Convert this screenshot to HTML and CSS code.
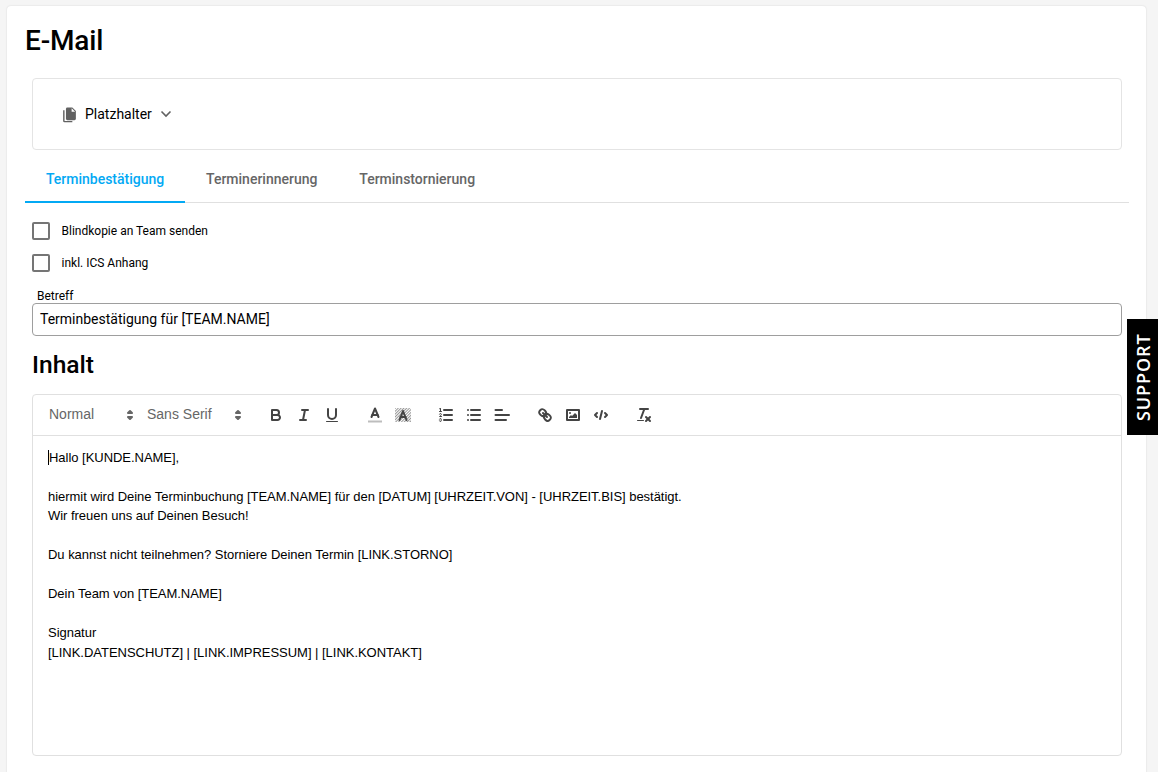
FILE: index.html
```html
<!DOCTYPE html>
<html lang="de">
<head>
<meta charset="utf-8">
<title>E-Mail</title>
<link rel="stylesheet" href="styles.css">
</head>
<body>
<main class="card">
  <h1 class="title">E-Mail</h1>
  <section class="panel">
    <button class="menu-btn" type="button">
      <svg class="copy-icon" viewBox="0 0 24 24" width="17" height="17"><path d="M9 2h7l5 5v11a2 2 0 0 1-2 2H9a2 2 0 0 1-2-2V4a2 2 0 0 1 2-2z"/><path d="M3 6h2v15h11v2H5a2 2 0 0 1-2-2V6z"/><path d="M15 3v5h5z" fill="#fff"/></svg>
      <span>Platzhalter</span>
      <svg class="chev" viewBox="0 0 12 8" width="12" height="8"><polyline points="1.5 1.5 6 6 10.5 1.5"/></svg>
    </button>
  </section>
  <nav class="tabs">
    <a class="tab active">Terminbestätigung</a>
    <a class="tab">Terminerinnerung</a>
    <a class="tab">Terminstornierung</a>
  </nav>
  <div class="form">
    <label class="check"><span class="box"></span><span>Blindkopie an Team senden</span></label>
    <label class="check"><span class="box"></span><span>inkl. ICS Anhang</span></label>
    <div class="field-label">Betreff</div>
    <div class="input">Terminbestätigung für [TEAM.NAME]</div>
    <h2 class="subtitle">Inhalt</h2>
    <div class="editor">
      <div class="toolbar">
        <div class="picker header-picker"><span>Normal</span><svg viewBox="0 0 18 18" width="18" height="18"><polygon class="arrow" points="7 11 9 13 11 11 7 11"/><polygon class="arrow" points="7 7 9 5 11 7 7 7"/></svg></div>
        <div class="picker font-picker"><span>Sans Serif</span><svg viewBox="0 0 18 18" width="18" height="18"><polygon class="arrow" points="7 11 9 13 11 11 7 11"/><polygon class="arrow" points="7 7 9 5 11 7 7 7"/></svg></div>
        <div class="group">
          <svg class="ico" viewBox="0 0 18 18"><path class="s" d="M5,4H9.5A2.5,2.5,0,0,1,12,6.5v0A2.5,2.5,0,0,1,9.5,9H5A0,0,0,0,1,5,9V4A0,0,0,0,1,5,4Z"/><path class="s" d="M5,9h5.5A2.5,2.5,0,0,1,13,11.5v0A2.5,2.5,0,0,1,10.5,14H5a0,0,0,0,1,0,0V9A0,0,0,0,1,5,9Z"/></svg>
          <svg class="ico" viewBox="0 0 18 18"><line class="s" x1="7" x2="13" y1="4" y2="4"/><line class="s" x1="5" x2="11" y1="14" y2="14"/><line class="s" x1="8" x2="10" y1="14" y2="4"/></svg>
          <svg class="ico" viewBox="0 0 18 18"><path class="s" d="M5,3V9a4.012,4.012,0,0,0,4,4H9a4.012,4.012,0,0,0,4-4V3"/><rect class="f" height="1" rx="0.5" ry="0.5" width="12" x="3" y="15"/></svg>
        </div>
        <div class="group">
          <svg class="ico" viewBox="0 0 18 18"><line class="s light" x1="3" x2="15" y1="15.5" y2="15.5"/><polyline class="s" points="5.5 11 9 2.5 12.5 11"/><line class="s" x1="11.63" x2="6.38" y1="9" y2="9"/></svg>
          <svg class="ico" viewBox="0 0 18 18"><defs><pattern id="hatch" width="2" height="2" patternUnits="userSpaceOnUse" patternTransform="rotate(45)"><rect width="1" height="2" fill="#444"/></pattern></defs><rect x="1" y="2" width="16" height="14" fill="url(#hatch)" opacity=".55"/><polyline class="s" points="5.5 14 9 5 12.5 14"/><line class="s" x1="11.63" x2="6.38" y1="11" y2="11"/></svg>
        </div>
        <div class="group">
          <svg class="ico" viewBox="0 0 18 18"><line class="s" x1="7" x2="15" y1="4" y2="4"/><line class="s" x1="7" x2="15" y1="9" y2="9"/><line class="s" x1="7" x2="15" y1="14" y2="14"/><line class="s thin" x1="2.5" x2="4.5" y1="5.5" y2="5.5"/><path class="f" d="M3.5,6A0.5,0.5,0,0,1,3,5.5V3.085l-0.276.138A0.5,0.5,0,0,1,2.053,3c-0.124-.247-0.023-0.324.224-0.447l1-.5A0.5,0.5,0,0,1,4,2.5v3A0.5,0.5,0,0,1,3.5,6Z"/><path class="s thin" d="M4.5,10.5h-2c0-.234,1.85-1.076,1.85-2.234A0.959,0.959,0,0,0,2.5,8.156"/><path class="s thin" d="M2.5,14.846a0.959,0.959,0,0,0,1.85-.109A0.7,0.7,0,0,0,3.75,14a0.688,0.688,0,0,0,.6-0.736,0.959,0.959,0,0,0-1.85-.109"/></svg>
          <svg class="ico" viewBox="0 0 18 18"><line class="s" x1="6" x2="15" y1="4" y2="4"/><line class="s" x1="6" x2="15" y1="9" y2="9"/><line class="s" x1="6" x2="15" y1="14" y2="14"/><line class="s" x1="3" x2="3" y1="4" y2="4"/><line class="s" x1="3" x2="3" y1="9" y2="9"/><line class="s" x1="3" x2="3" y1="14" y2="14"/></svg>
          <svg class="ico" viewBox="0 0 18 18"><line class="s" x1="2.5" x2="16" y1="9" y2="9"/><line class="s" x1="2.5" x2="13" y1="14" y2="14"/><line class="s" x1="2.5" x2="9" y1="4" y2="4"/></svg>
        </div>
        <div class="group">
          <svg class="ico" viewBox="0 0 18 18"><line class="s" x1="7" x2="11" y1="7" y2="11"/><path class="s" d="M8.9,4.577a3.476,3.476,0,0,1,.36,4.679A3.476,3.476,0,0,1,4.577,8.9C3.185,7.5,2.035,6.4,4.217,4.217S7.5,3.185,8.9,4.577Z"/><path class="s" d="M13.423,9.1a3.476,3.476,0,0,0-4.679-.36,3.476,3.476,0,0,0,.36,4.679c1.392,1.392,2.5,2.542,4.679.36S14.815,10.5,13.423,9.1Z"/></svg>
          <svg class="ico" viewBox="0 0 18 18"><rect class="s" height="10" width="12" x="3" y="4"/><circle class="f" cx="6" cy="7" r="1"/><polyline class="f" points="5 12 5 11 7 9 8 10 11 7 13 9 13 12 5 12"/></svg>
          <svg class="ico" viewBox="0 0 18 18"><polyline class="s" points="5 7 3 9 5 11"/><polyline class="s" points="13 7 15 9 13 11"/><line class="s" x1="10" x2="8" y1="5" y2="13"/></svg>
        </div>
        <div class="group">
          <svg class="ico" viewBox="0 0 18 18"><line class="s" x1="5" x2="13" y1="3" y2="3"/><line class="s" x1="6" x2="9.35" y1="12" y2="3"/><line class="s" x1="11" x2="15" y1="11" y2="15"/><line class="s" x1="15" x2="11" y1="11" y2="15"/><rect class="f" height="1" rx="0.5" ry="0.5" width="7" x="2" y="14"/></svg>
        </div>
      </div>
      <div class="content">
        <p><span class="caret"></span>Hallo [KUNDE.NAME],</p>
        <p><br></p>
        <p>hiermit wird Deine Terminbuchung [TEAM.NAME] für den [DATUM] [UHRZEIT.VON] - [UHRZEIT.BIS] bestätigt.</p>
        <p>Wir freuen uns auf Deinen Besuch!</p>
        <p><br></p>
        <p>Du kannst nicht teilnehmen? Storniere Deinen Termin [LINK.STORNO]</p>
        <p><br></p>
        <p>Dein Team von [TEAM.NAME]</p>
        <p><br></p>
        <p>Signatur</p>
        <p>[LINK.DATENSCHUTZ] | [LINK.IMPRESSUM] | [LINK.KONTAKT]</p>
      </div>
    </div>
  </div>
</main>
<a class="support">SUPPORT</a>
</body>
</html>
```
FILE: styles.css
```css
* { box-sizing: border-box; }
html, body { margin: 0; height: 772px; overflow: hidden; }
body { background: #f5f5f5; font-family: Roboto, "Liberation Sans", sans-serif; color: #000; }
.card {
  margin: 6px 12px 0 7px;
  height: 800px;
  padding: 0 17px 0 18px;
  background: #fff;
  border-radius: 4px;
  box-shadow: 0 0 2px rgba(0,0,0,.14);
}
.title { margin: 0; padding-top: 18px; height: 72px; font-size: 28px; line-height: 34px; font-weight: 500; letter-spacing: -.15px; }
.panel {
  margin: 0 7px;
  height: 72px;
  border: 1px solid #e4e4e4;
  border-radius: 4px;
  display: flex;
  align-items: center;
  padding-left: 28px;
}
.menu-btn {
  display: flex; align-items: center;
  background: none; border: 0; padding: 0;
  font: 400 14px Roboto, sans-serif; color: #000;
}
.copy-icon { fill: #616161; margin-right: 7px; }
.chev { margin-left: 8px; fill: none; stroke: #616161; stroke-width: 1.6; }
.tabs { display: flex; height: 53px; padding-top: 7px; border-bottom: 1px solid #e0e0e0; }
.tab {
  display: flex; align-items: center;
  padding: 0 20.9px;
  font-size: 14px; font-weight: 500; color: #666;
  margin-bottom: -1px;
  border-bottom: 2px solid transparent;
}
.tab.active { color: #03a9f4; border-bottom-color: #03a9f4; }
.form { padding: 19px 7px 0; }
.check { display: flex; align-items: center; height: 18px; margin-bottom: 14px; font-size: 12px; }
.box { width: 18px; height: 18px; margin-right: 11.5px; border: 2px solid #757575; border-radius: 2px; }
.field-label { margin: 17px 0 -1px 5px; height: 15px; font-size: 12px; line-height: 15px; }
.input {
  height: 33px;
  padding: 0 7px;
  border: 1px solid #9e9e9e;
  border-radius: 4px;
  font-size: 14px;
  line-height: 30px;
}
.subtitle { margin: 0; height: 58px; padding-top: 12px; font-size: 24.6px; line-height: 34px; font-weight: 500; }
.editor { height: 362px; border: 1px solid #e0e0e0; border-radius: 4px; }
.toolbar {
  display: flex; align-items: center;
  height: 41px;
  padding: 0 8px;
  border-bottom: 1px solid #e0e0e0;
  font-family: "Liberation Sans", sans-serif;
}
.picker {
  display: flex; align-items: center; justify-content: space-between;
  height: 24px;
  padding-left: 8px;
  font-size: 14px; font-weight: 500; color: #666;
}
.picker span { margin-top: -2px; }
.header-picker { width: 98px; }
.font-picker { width: 108px; }
.group { display: flex; margin-left: 15px; }
.ico { width: 28px; height: 24px; padding: 3px 5px; display: block; }
.s { fill: none; stroke: #444; stroke-width: 2; stroke-linecap: round; stroke-linejoin: round; }
.f { fill: #444; }
.thin { stroke-width: 1; }
.light { stroke: #bdbdbd; stroke-linecap: square; }
.arrow { fill: #666; stroke: #666; stroke-width: 2; stroke-linejoin: round; }
.content {
  padding: 11.7px 15px;
  font-family: "Liberation Sans", sans-serif;
  font-size: 13px;
  line-height: 19.5px;
  letter-spacing: -.03px;
  color: #000;
}
.content p { margin: 0; }
.caret { display: inline-block; width: 0; height: 15px; border-left: 1px solid #000; vertical-align: -3px; }
.support {
  position: absolute; left: 1127px; top: 319px;
  width: 31px; height: 116px;
  display: flex; align-items: center; justify-content: center;
  padding-right: 1px;
  background: #000; color: #fff;
  font-family: "Open Sans", sans-serif; font-size: 18px; font-weight: 600; letter-spacing: .9px;
  writing-mode: vertical-rl; transform: rotate(180deg);
}
```
